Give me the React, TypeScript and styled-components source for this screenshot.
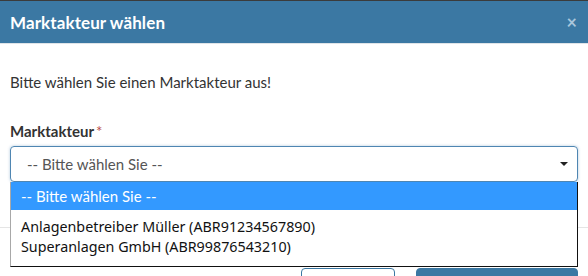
import React from 'react';
import styled, { createGlobalStyle } from 'styled-components';

interface IOption {
  value: string;
  label: string;
}

const options: IOption[] = [
  { value: 'ABR91234567890', label: 'Anlagenbetreiber Müller (ABR91234567890)' },
  { value: 'ABR99876543210', label: 'Superanlagen GmbH (ABR99876543210)' },
];

const GlobalStyle = createGlobalStyle`
  html, body {
    margin: 0;
    padding: 0;
    background: #fff;
  }
  body {
    font-family: Lato, "Open Sans", sans-serif;
    color: #333;
  }
`;

const ModalWrap = styled.div`
  width: 588px;
  height: 276px;
  overflow: hidden;
  border-top: 1px solid #3b3b3b;
  box-sizing: border-box;
  position: relative;
`;

const ModalHeader = styled.div`
  height: 42px;
  background: #3b78a3;
  border-bottom: 1px solid #dfe4e8;
  display: flex;
  align-items: center;
  justify-content: space-between;
  padding: 0 10px 0 10px;
  color: #fff;

  .title {
    font-size: 17px;
    font-weight: 700;
    letter-spacing: 0.1px;
  }

  .close {
    font-size: 18px;
    font-weight: 700;
    color: #a9c6dc;
    line-height: 1;
    margin-right: 1px;
  }
`;

const ModalBody = styled.div`
  padding: 28px 10px 0;

  .intro {
    font-size: 15px;
    line-height: 20px;
    margin: 0 0 29px;
  }
`;

const FieldLabel = styled.label`
  display: block;
  font-size: 15px;
  font-weight: 700;
  line-height: 20px;
  margin-bottom: 5px;
  color: #333;

  .required {
    color: #b94a48;
    font-weight: 400;
    margin-left: 2px;
  }
`;

const SelectWrap = styled.div`
  position: relative;
`;

const SelectBox = styled.div`
  height: 36px;
  box-sizing: border-box;
  border: 1px solid #4f86b2;
  border-radius: 4px;
  box-shadow: 0 0 3px rgba(79, 134, 178, 0.45);
  display: flex;
  align-items: center;
  justify-content: space-between;
  padding: 0 9px 0 16px;
  font-size: 15px;
  color: #555;

  .caret {
    width: 0;
    height: 0;
    border-left: 4px solid transparent;
    border-right: 4px solid transparent;
    border-top: 4px solid #222;
  }
`;

const DropList = styled.div`
  position: absolute;
  top: 36px;
  left: 0;
  right: 0;
  z-index: 2;
  background: #fff;
  border-left: 1px solid #a8a8a8;
  border-right: 1px solid #111;
  border-bottom: 1px solid #111;
  font-family: "Noto Sans", "Open Sans", sans-serif;
  font-size: 14.3px;
  color: #111;
  padding-bottom: 9px;
`;

const DropItem = styled.div<{ $active?: boolean }>`
  padding: 0 10px;
  line-height: ${({ $active }) => ($active ? '28px' : '20px')};
  font-size: ${({ $active }) => ($active ? '15px' : 'inherit')};
  font-family: ${({ $active }) =>
    $active ? 'Lato, "Open Sans", sans-serif' : 'inherit'};
  background: ${({ $active }) => ($active ? '#3399ff' : 'transparent')};
  color: ${({ $active }) => ($active ? '#fff' : '#111')};
  margin-bottom: ${({ $active }) => ($active ? '7px' : '0')};
`;

const ModalFooter = styled.div`
  margin-top: 45px;
  border-top: 1px solid #e5e5e5;
  display: flex;
  justify-content: flex-end;
  gap: 21px;
  padding: 40px 10px 0;
`;

const FooterButton = styled.button<{ $primary?: boolean }>`
  height: 34px;
  border-radius: 4px;
  border: 1px solid #3b78a3;
  background: ${({ $primary }) => ($primary ? '#3b78a3' : '#fff')};
  width: ${({ $primary }) => ($primary ? '162px' : '94px')};
`;

const App = () => {
  return (
    <>
      <GlobalStyle />
      <ModalWrap>
        <ModalHeader>
          <span className='title'>Marktakteur wählen</span>
          <span className='close'>×</span>
        </ModalHeader>

        <ModalBody>
          <p className='intro'>Bitte wählen Sie einen Marktakteur aus!</p>

          <FieldLabel>
            Marktakteur<span className='required'>*</span>
          </FieldLabel>

          <SelectWrap>
            <SelectBox>
              <span>-- Bitte wählen Sie --</span>
              <span className='caret' />
            </SelectBox>

            <DropList>
              <DropItem $active>-- Bitte wählen Sie --</DropItem>
              {options.map((o) => (
                <DropItem key={o.value}>{o.label}</DropItem>
              ))}
            </DropList>
          </SelectWrap>
        </ModalBody>

        {/* Buttons liegen fast komplett unterhalb des sichtbaren Bereichs */}
        <ModalFooter>
          <FooterButton aria-label='Abbrechen' />
          <FooterButton $primary aria-label='Übernehmen' />
        </ModalFooter>
      </ModalWrap>
    </>
  );
};

export default App;
